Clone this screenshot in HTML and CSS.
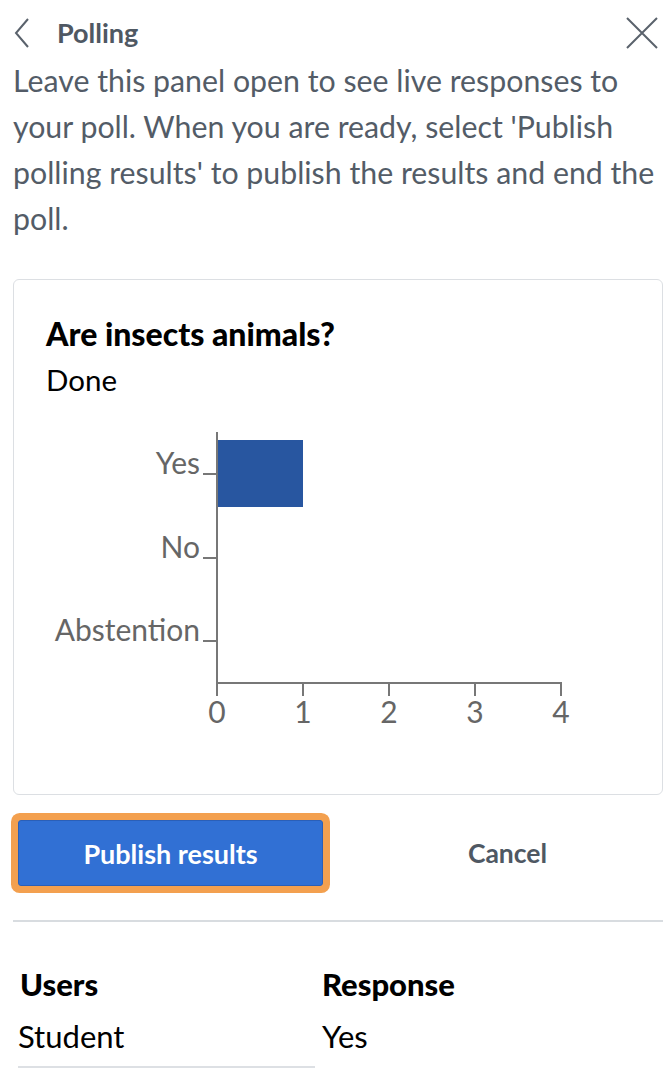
FILE: index.html
```html
<!DOCTYPE html>
<html lang="en">
<head>
<meta charset="utf-8">
<title>Polling</title>
<link rel="stylesheet" href="styles.css">
</head>
<body>
<div class="panel">
  <header class="header">
    <button class="icon-btn back" aria-label="Back">
      <svg width="18" height="32" viewBox="0 0 18 32"><path d="M15 2 L3 16 L15 30" fill="none" stroke="#5a626c" stroke-width="2"/></svg>
    </button>
    <h1 class="title">Polling</h1>
    <button class="icon-btn close" aria-label="Close">
      <svg width="34" height="32" viewBox="0 0 34 32"><path d="M2 1 L32 31 M32 1 L2 31" fill="none" stroke="#5a626c" stroke-width="2"/></svg>
    </button>
  </header>
  <p class="intro">Leave this panel open to see live responses to your poll. When you are ready, select 'Publish polling results' to publish the results and end the poll.</p>

  <section class="card">
    <h2 class="question">Are insects animals?</h2>
    <div class="status">Done</div>
    <svg class="chart" width="648" height="320" viewBox="0 0 648 320">
      <rect x="203" y="20" width="86" height="67" fill="#2856a0"/>
      <g stroke="#777" stroke-width="2" fill="none">
        <path d="M203 12 V276"/>
        <path d="M202 263 H548"/>
        <path d="M289 263 V276 M375 263 V276 M461 263 V276 M547 263 V276"/>
        <path d="M189 54 H203 M189 138 H203 M189 221 H203"/>
      </g>
      <g class="cat" text-anchor="end">
        <text x="186" y="54">Yes</text>
        <text x="186" y="138">No</text>
        <text x="186" y="221">Abstention</text>
      </g>
      <g class="num" text-anchor="middle">
        <text x="203" y="303">0</text>
        <text x="289" y="303">1</text>
        <text x="375" y="303">2</text>
        <text x="461" y="303">3</text>
        <text x="547" y="303">4</text>
      </g>
    </svg>
  </section>

  <div class="actions">
    <button class="btn primary">Publish results</button>
    <button class="btn link">Cancel</button>
  </div>

  <hr class="divider">

  <table class="responses">
    <thead>
      <tr><th>Users</th><th>Response</th></tr>
    </thead>
    <tbody>
      <tr><td class="user">Student</td><td>Yes</td></tr>
    </tbody>
  </table>
</div>
</body>
</html>
```

FILE: styles.css
```css
* { box-sizing: border-box; }
html, body { margin: 0; padding: 0; background: #fff; }
body {
  font-family: Lato, "Open Sans", "Liberation Sans", sans-serif;
  color: #4f5863;
}
.panel { padding: 0 9px 0 13px; }

.header {
  display: flex;
  align-items: center;
  height: 57px;
  padding-top: 8px;
}
.icon-btn {
  border: 0;
  background: none;
  padding: 0;
  display: flex;
  align-items: center;
  cursor: pointer;
}
.title {
  margin: 0 0 0 26px;
  font-size: 27px;
  font-weight: 700;
  color: #4f5863;
  flex: 1;
}
.close { margin-right: 4px; }

.intro {
  margin: 0 -9px 0 0;
  font-size: 30.3px;
  line-height: 46px;
  color: #535c67;
}

.card {
  margin-top: 38px;
  width: 650px;
  height: 516px;
  border: 1px solid #dcdfe3;
  border-radius: 6px;
  padding-top: 31px;
}
.question {
  margin: 0 0 0 32px;
  font-size: 32px;
  line-height: 46px;
  font-weight: 900;
  color: #000;
}
.status {
  margin-left: 32px;
  font-size: 29.5px;
  line-height: 46px;
  color: #000;
}
.chart { display: block; margin-top: 17px; }
.chart text { font-family: Lato, "Open Sans", sans-serif; fill: #666; }
.chart .cat text { font-size: 30px; }
.chart .num text { font-size: 30px; }

.actions {
  display: grid;
  grid-template-columns: 305px 305px;
  column-gap: 32px;
  margin-top: 25px;
  padding-left: 5px;
}
.btn {
  height: 66px;
  font-family: inherit;
  font-size: 27px;
  font-weight: 700;
  border-radius: 3px;
  cursor: pointer;
}
.primary {
  background: #3170d4;
  color: #fff;
  border: 1px solid #2a5fb8;
  box-shadow: 0 0 0 7px #f3a04f;
}
.link {
  background: none;
  border: 0;
  font-size: 26.5px;
  color: #4f5863;
}

.divider {
  margin: 34px 0 0 0;
  width: 650px;
  border: 0;
  border-top: 2px solid #d8dce0;
}

.responses {
  margin-top: 36px;
  margin-left: 5px;
  border-collapse: collapse;
  color: #000;
}
.responses th {
  text-align: left;
  font-size: 31px;
  font-weight: 900;
  padding: 0;
  height: 52px;
  line-height: 52px;
  width: 304px;
  vertical-align: top;
}
.responses th:first-child { padding-left: 2px; }
.responses td {
  font-size: 31px;
  padding: 0;
  height: 58px;
  line-height: 52px;
  vertical-align: top;
}
.responses td.user {
  background: linear-gradient(#dde0e4, #dde0e4) no-repeat left bottom / 297px 2px;
}
```
